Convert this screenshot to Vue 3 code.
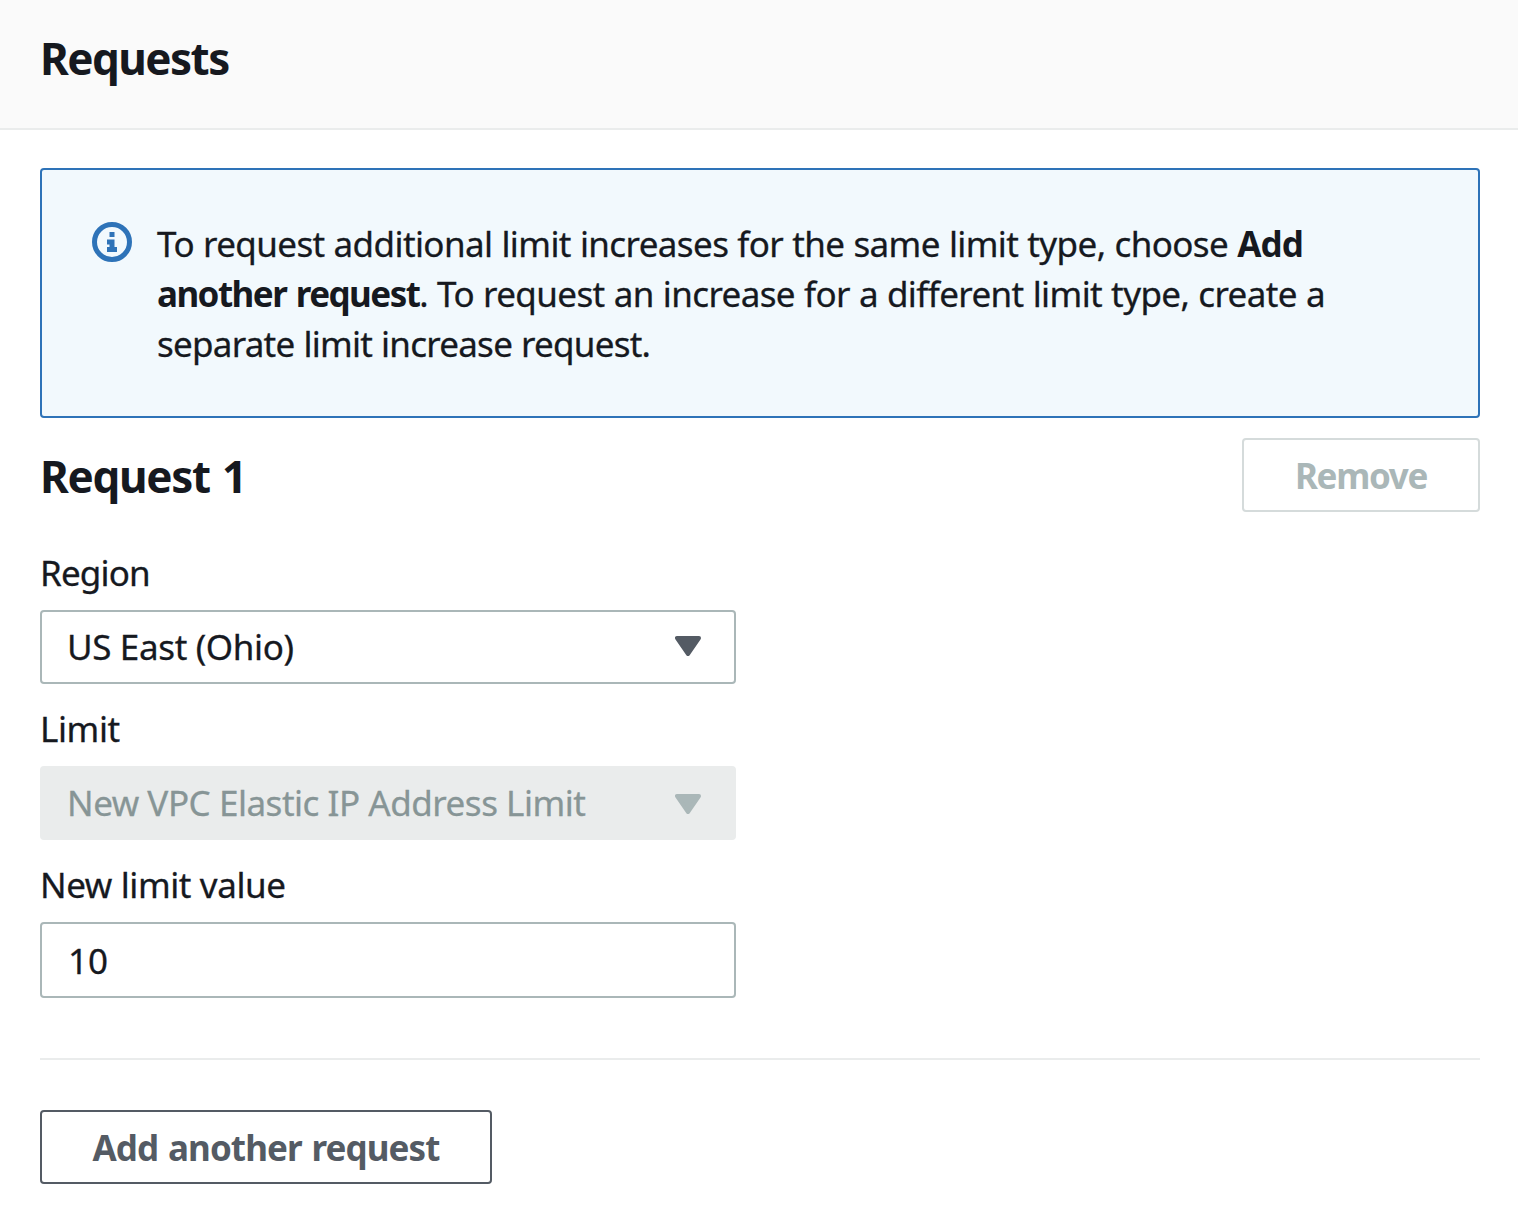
<script setup>
import { ref } from 'vue'

const region = ref('US East (Ohio)')
const limit = ref('New VPC Elastic IP Address Limit')
const limitValue = ref('10')
</script>

<template>
  <section class="panel">
    <header class="panel-header">
      <h2 class="title">Requests</h2>
    </header>

    <div class="panel-body">
      <div class="alert" role="status">
        <svg class="alert-icon" viewBox="0 0 40 40" aria-hidden="true">
          <circle cx="20" cy="20" r="17.5" fill="none" stroke="currentColor" stroke-width="5" />
          <path fill="currentColor" d="M17.5 10h5v5h-5zM15 17.5h7.5V25H25v5H15v-5h2.5v-2.5H15z" />
        </svg>
        <p class="alert-text">
          <span class="line-a">To request additional limit increases for the same limit type, choose </span><b class="add">Add</b><br>
          <b class="another">another request</b><span class="line-b">. To request an increase for a different limit type, create a</span><br>
          <span class="line-c">separate limit increase request.</span>
        </p>
      </div>

      <div class="request-head">
        <h2 class="title request-title">Request 1</h2>
        <button class="btn btn-remove" type="button" disabled>Remove</button>
      </div>

      <div class="fields">
        <div class="field">
          <label class="label region-label">Region</label>
          <div class="control select">
            <span class="region-value">{{ region }}</span>
            <svg class="caret" viewBox="0 0 26 20" aria-hidden="true">
              <path d="M2 2h22L13 18z" fill="currentColor" stroke="currentColor" stroke-width="4" stroke-linejoin="round" />
            </svg>
          </div>
        </div>
        <div class="field">
          <label class="label">Limit</label>
          <div class="control select disabled">
            <span class="limit-value">{{ limit }}</span>
            <svg class="caret" viewBox="0 0 26 20" aria-hidden="true">
              <path d="M2 2h22L13 18z" fill="currentColor" stroke="currentColor" stroke-width="4" stroke-linejoin="round" />
            </svg>
          </div>
        </div>
        <div class="field">
          <label class="label" for="limit-value">New limit value</label>
          <input id="limit-value" v-model="limitValue" class="control input" type="text">
        </div>
      </div>

      <hr class="divider">
      <button class="btn btn-add" type="button">Add another request</button>
    </div>
  </section>
</template>

<style>
body {
  margin: 0;
  background: #fff;
}
</style>

<style scoped>
.panel {
  box-sizing: border-box;
  min-height: 1230px;
  color: #16191f;
  font-family: 'Noto Sans', 'Open Sans', sans-serif;
  font-size: 35px;
  -webkit-text-stroke: 0.3px currentColor;
}

.panel-header {
  box-sizing: border-box;
  height: 130px;
  padding: 28px 40px 0;
  background: #fafafa;
  border-bottom: 2px solid #eaecec;
}

.title {
  margin: 0;
  font-size: 44px;
  font-weight: 700;
  line-height: 60px;
  letter-spacing: -1.55px;
  -webkit-text-stroke: 0;
}

.panel-body {
  padding: 38px 38px 0 40px;
}

.alert {
  box-sizing: border-box;
  display: flex;
  height: 250px;
  padding: 49px 50px 0;
  background: #f2f9fd;
  border: 2px solid #2e73b8;
  border-radius: 4px;
}

.alert-icon {
  flex: none;
  width: 40px;
  height: 40px;
  margin: 3px 25px 0 0;
  color: #2e73b8;
}

.alert-text {
  margin: 0;
  line-height: 50px;
  white-space: nowrap;
}

.alert-text b {
  -webkit-text-stroke: 0;
}

.line-a { letter-spacing: -0.6px; word-spacing: 0.5px; }
.line-b { letter-spacing: -0.6px; word-spacing: 0.5px; }
.line-c { letter-spacing: -0.75px; word-spacing: 0.6px; }
.add { letter-spacing: -0.9px; }
.another { letter-spacing: -1.55px; word-spacing: 2px; }

.request-head {
  display: flex;
  align-items: center;
  justify-content: space-between;
  height: 74px;
  margin-top: 20px;
}

.request-title {
  padding-top: 2px;
  letter-spacing: -1.3px;
  word-spacing: 2px;
}

.btn {
  box-sizing: border-box;
  height: 74px;
  padding: 2px 0 0;
  border: 2px solid #545b64;
  border-radius: 4px;
  background: #fff;
  color: #545b64;
  font-family: inherit;
  font-size: 35px;
  font-weight: 700;
  line-height: 68px;
  letter-spacing: -0.9px;
  word-spacing: 1.5px;
  -webkit-text-stroke: 0;
}

.btn-remove {
  width: 238px;
  border-color: #d5dbdb;
  color: #aab7b8;
  letter-spacing: -1.3px;
}

.btn-add {
  display: block;
  width: 452px;
}

.fields {
  display: flex;
  flex-direction: column;
  gap: 22px;
  width: 696px;
  margin-top: 38px;
}

.field {
  display: flex;
  flex-direction: column;
  gap: 16px;
}

.label {
  box-sizing: border-box;
  height: 44px;
  padding-top: 1px;
  line-height: 44px;
  letter-spacing: -0.4px;
}

.region-label { letter-spacing: -0.85px; }

.control {
  box-sizing: border-box;
  height: 74px;
  padding: 0 33px 0 25px;
  border: 2px solid #aab7b8;
  border-radius: 4px;
  background: #fff;
  line-height: 70px;
}

.select {
  display: flex;
  justify-content: space-between;
}

.region-value { letter-spacing: -0.35px; }
.limit-value { letter-spacing: -0.47px; }

.caret {
  width: 26px;
  height: 20px;
  margin-top: 24px;
  color: #545b64;
}

.disabled {
  border-color: #eaecec;
  background: #eaecec;
  color: #879596;
}

.disabled .caret {
  margin-top: 26px;
  color: #aab7b8;
}

.input {
  width: 100%;
  height: 76px;
  padding-left: 26px;
  outline: 0;
  color: inherit;
  font: inherit;
  -webkit-text-stroke: inherit;
}

.divider {
  height: 2px;
  margin: 60px 0 50px;
  border: 0;
  background: #eaecec;
}
</style>
